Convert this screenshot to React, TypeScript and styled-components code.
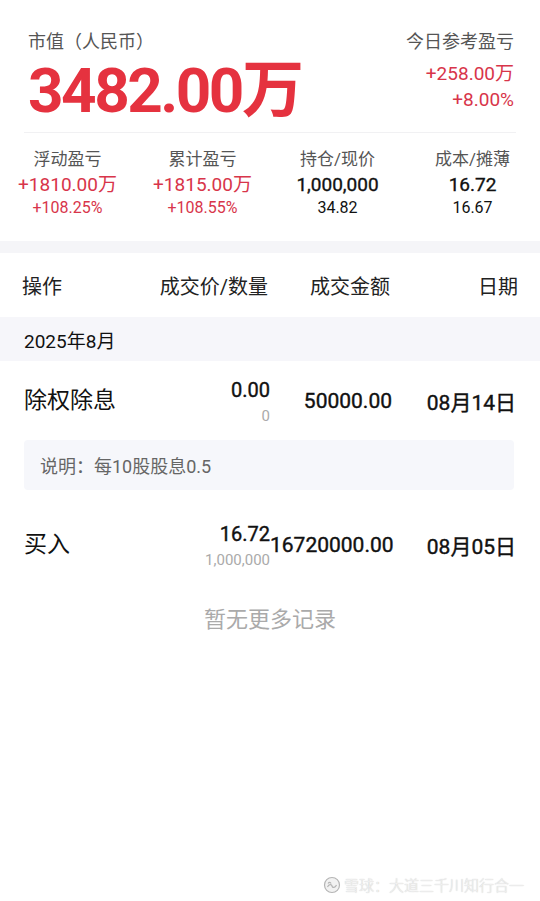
import React from "react";
import styled, { createGlobalStyle } from "styled-components";

const GlobalStyle = createGlobalStyle`
  html, body {
    margin: 0;
    padding: 0;
    background: #ffffff;
  }
  body {
    font-family: "Roboto", "Noto Sans CJK SC", sans-serif;
    color: #1a1a1a;
  }
`;

const Page = styled.div`
  position: relative;
  width: 540px;
  min-height: 901px;
  background: #ffffff;
`;

const Summary = styled.div`
  padding: 30px 26px 0 28px;
  display: flex;
  justify-content: space-between;
`;

const SummaryLeft = styled.div`
  display: flex;
  flex-direction: column;
`;

const SummaryRight = styled.div`
  display: flex;
  flex-direction: column;
  align-items: flex-end;
`;

const MutedLabel = styled.div`
  font-size: 18px;
  line-height: 24px;
  color: #555;
`;

const BigValue = styled.div`
  font-size: 62px;
  line-height: 68px;
  font-weight: 700;
  color: #e5323f;
  letter-spacing: -2.5px;
  margin-top: 3px;
`;

const RedLine = styled.div<{ $top?: number }>`
  font-size: 19px;
  line-height: 24px;
  color: #d8354a;
  margin-top: ${(p) => p.$top ?? 0}px;
`;

const Divider = styled.div`
  margin: 7px 24px 0;
  border-top: 1px solid #f1f1f3;
`;

const StatsGrid = styled.div`
  display: grid;
  grid-template-columns: repeat(4, 1fr);
  padding: 15px 0 23px;
`;

const Stat = styled.div`
  display: flex;
  flex-direction: column;
  align-items: center;
`;

const StatLabel = styled.div`
  font-size: 17px;
  line-height: 22px;
  color: #555;
`;

const StatValue = styled.div<{ $red?: boolean }>`
  font-size: 19px;
  line-height: 22px;
  margin-top: 4px;
  color: ${(p) => (p.$red ? "#d8354a" : "#111")};
  -webkit-text-stroke: ${(p) => (p.$red ? "0" : "0.35px #111")};
`;

const StatSub = styled.div<{ $red?: boolean }>`
  font-size: 16px;
  line-height: 20px;
  margin-top: 2px;
  color: ${(p) => (p.$red ? "#d8354a" : "#111")};
`;

const Band = styled.div`
  height: 12px;
  background: #f5f5f8;
`;

const Columns = styled.div`
  display: grid;
  grid-template-columns: 126px 120px 122px 1fr;
  align-items: center;
  padding: 0 24px;
`;

const TableHead = styled(Columns)`
  height: 64px;
  padding-left: 22px;
  padding-right: 22px;
  font-size: 20px;
  color: #222;
`;

const HeadCell = styled.div<{ $align?: string }>`
  text-align: ${(p) => p.$align ?? "left"};
  white-space: nowrap;
`;

const MonthBar = styled.div`
  height: 44px;
  display: flex;
  align-items: center;
  padding: 0 24px;
  background: #f6f6fa;
  font-size: 19px;
  color: #111;
`;

const Record = styled.div`
  padding-bottom: 15px;
`;

const Row = styled(Columns)`
  height: 74px;
`;

const Action = styled.div`
  font-size: 23px;
  color: #111;
`;

const PriceCell = styled.div`
  display: flex;
  flex-direction: column;
  align-items: flex-end;
  margin-top: 10px;
`;

const Price = styled.div`
  font-size: 20px;
  line-height: 24px;
  color: #111;
  -webkit-text-stroke: 0.4px #111;
`;

const Qty = styled.div`
  font-size: 15px;
  line-height: 24px;
  margin-top: 2px;
  color: #aaa;
`;

const Amount = styled.div`
  font-size: 21px;
  color: #111;
  text-align: right;
  white-space: nowrap;
  margin-top: 5px;
  -webkit-text-stroke: 0.4px #111;
`;

const DateCell = styled(Amount)``;

const Note = styled.div`
  margin: 5px 26px 0 24px;
  height: 50px;
  display: flex;
  align-items: center;
  padding: 0 16px;
  background: #f6f7fb;
  border-radius: 4px;
  font-size: 18px;
  color: #666;
`;

const EndNote = styled.div`
  margin-top: 12px;
  text-align: center;
  font-size: 22px;
  line-height: 28px;
  color: #aaa;
`;

const Watermark = styled.div`
  position: absolute;
  right: 16px;
  bottom: 6px;
  display: flex;
  align-items: center;
  gap: 3px;
  font-size: 15px;
  font-weight: 300;
  color: #f2f2f2;
  text-shadow: 0 0 1px #b5b5b5;
`;

const stats = [
  { label: "浮动盈亏", value: "+1810.00万", sub: "+108.25%", red: true },
  { label: "累计盈亏", value: "+1815.00万", sub: "+108.55%", red: true },
  { label: "持仓/现价", value: "1,000,000", sub: "34.82", red: false },
  { label: "成本/摊薄", value: "16.72", sub: "16.67", red: false },
];

const records = [
  {
    action: "除权除息",
    price: "0.00",
    qty: "0",
    amount: "50000.00",
    date: "08月14日",
    note: "说明：每10股股息0.5",
  },
  {
    action: "买入",
    price: "16.72",
    qty: "1,000,000",
    amount: "16720000.00",
    date: "08月05日",
    note: "",
  },
];

const App = () => {
  return (
    <Page>
      <GlobalStyle />
      <Summary>
        <SummaryLeft>
          <MutedLabel>市值（人民币）</MutedLabel>
          <BigValue>3482.00万</BigValue>
        </SummaryLeft>
        <SummaryRight>
          <MutedLabel>今日参考盈亏</MutedLabel>
          <RedLine $top={8}>+258.00万</RedLine>
          <RedLine $top={2}>+8.00%</RedLine>
        </SummaryRight>
      </Summary>
      <Divider />
      <StatsGrid>
        {stats.map((s) => (
          <Stat key={s.label}>
            <StatLabel>{s.label}</StatLabel>
            <StatValue $red={s.red}>{s.value}</StatValue>
            <StatSub $red={s.red}>{s.sub}</StatSub>
          </Stat>
        ))}
      </StatsGrid>
      <Band />
      <TableHead>
        <HeadCell>操作</HeadCell>
        <HeadCell $align="right">成交价/数量</HeadCell>
        <HeadCell $align="right">成交金额</HeadCell>
        <HeadCell $align="right">日期</HeadCell>
      </TableHead>
      <MonthBar>2025年8月</MonthBar>
      {records.map((r) => (
        <Record key={r.date}>
          <Row>
            <Action>{r.action}</Action>
            <PriceCell>
              <Price>{r.price}</Price>
              <Qty>{r.qty}</Qty>
            </PriceCell>
            <Amount>{r.amount}</Amount>
            <DateCell>{r.date}</DateCell>
          </Row>
          {r.note && <Note>{r.note}</Note>}
        </Record>
      ))}
      <EndNote>暂无更多记录</EndNote>
      <Watermark>
        <svg width="18" height="18" viewBox="0 0 18 18" fill="none" stroke="#b5b5b5" strokeWidth="1.2">
          <circle cx="9" cy="9" r="7.5" fill="#f2f2f2" />
          <path d="M4.5 11c1.5-3 4-3 4.5-1s3 2 4.5-1" />
          <path d="M5 7.5c1-1.5 2.5-1.5 3 0" />
        </svg>
        <span>雪球：大道三千川知行合一</span>
      </Watermark>
    </Page>
  );
};

export default App;
